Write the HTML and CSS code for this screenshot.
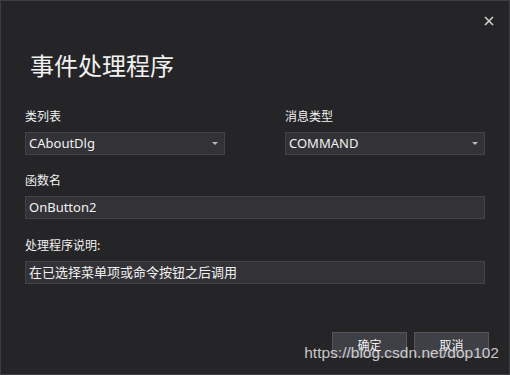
FILE: index.html
```html
<!DOCTYPE html>
<html lang="zh-CN">
<head>
    <meta charset="UTF-8">
    <title>事件处理程序</title>
    <link rel="stylesheet" href="styles.css">
</head>
<body>
    <div class="dialog">
        <button class="close" aria-label="关闭">
            <svg width="10" height="10" viewBox="0 0 10 10"><path d="M1 1L9 9M9 1L1 9" stroke="#d0d0d0" stroke-width="1.6"/></svg>
        </button>
        <h1>事件处理程序</h1>

        <div class="row">
            <div class="field">
                <label>类列表</label>
                <div class="combo"><span>CAboutDlg</span><i class="arrow"></i></div>
            </div>
            <div class="field">
                <label>消息类型</label>
                <div class="combo"><span>COMMAND</span><i class="arrow"></i></div>
            </div>
        </div>

        <div class="field wide">
            <label>函数名</label>
            <div class="box">OnButton2</div>
        </div>

        <div class="field wide">
            <label>处理程序说明:</label>
            <div class="box">在已选择菜单项或命令按钮之后调用</div>
        </div>

        <div class="buttons">
            <button class="btn">确定</button>
            <button class="btn">取消</button>
        </div>

        <div class="watermark">https://blog.csdn.net/dop102</div>
    </div>
</body>
</html>
```

FILE: styles.css
```css
html, body {
    margin: 0;
    padding: 0;
    background-color: #252528;
}
body {
    font-family: "Noto Sans", "Noto Sans CJK SC", sans-serif;
    color: #f1f1f1;
}
.dialog {
    position: relative;
    box-sizing: border-box;
    width: 510px;
    height: 375px;
    border: 1px solid #3d3d42;
    background-color: #252528;
    padding: 0 24px 0 24px;
}
.close {
    position: absolute;
    top: 11px;
    right: 13px;
    width: 14px;
    height: 14px;
    padding: 2px;
    border: none;
    background: none;
}
h1 {
    margin: 0;
    padding: 47px 0 0 5px;
    font-family: "Noto Sans CJK SC", sans-serif;
    font-size: 24px;
    font-weight: normal;
    line-height: 34px;
    color: #f1f1f1;
}
.row {
    display: grid;
    grid-template-columns: 200px 200px;
    column-gap: 60px;
    margin-top: 26px;
}
label {
    display: block;
    font-family: "Noto Sans CJK SC", sans-serif;
    font-size: 12px;
    line-height: 16px;
    height: 16px;
    margin-bottom: 8px;
    color: #f1f1f1;
}
.combo, .box {
    box-sizing: border-box;
    height: 23px;
    border: 1px solid #434347;
    background-color: #333337;
    font-size: 13px;
    line-height: 21px;
    padding: 0 3px;
    color: #f1f1f1;
}
.combo {
    display: flex;
    justify-content: space-between;
    align-items: center;
}
.arrow {
    width: 0;
    height: 0;
    border-left: 3px solid transparent;
    border-right: 3px solid transparent;
    border-top: 3px solid #b8b8b8;
    margin-right: 3px;
}
.wide {
    width: 460px;
    margin-top: 17px;
}
.wide + .wide {
    margin-top: 18px;
}
.box {
    font-family: "Noto Sans", "Noto Sans CJK SC", sans-serif;
}
.buttons {
    display: flex;
    justify-content: flex-end;
    gap: 7px;
    margin-top: 48px;
    width: 464px;
}
.btn {
    box-sizing: border-box;
    width: 75px;
    height: 25px;
    border: 1px solid #55555b;
    background-color: #3f3f46;
    color: #f1f1f1;
    font-family: "Noto Sans CJK SC", sans-serif;
    font-size: 12px;
}
.watermark {
    position: absolute;
    right: 10px;
    bottom: 12px;
    font-family: "Liberation Sans", Arial, sans-serif;
    font-size: 15.5px;
    color: rgba(230, 230, 230, 0.85);
}
```
